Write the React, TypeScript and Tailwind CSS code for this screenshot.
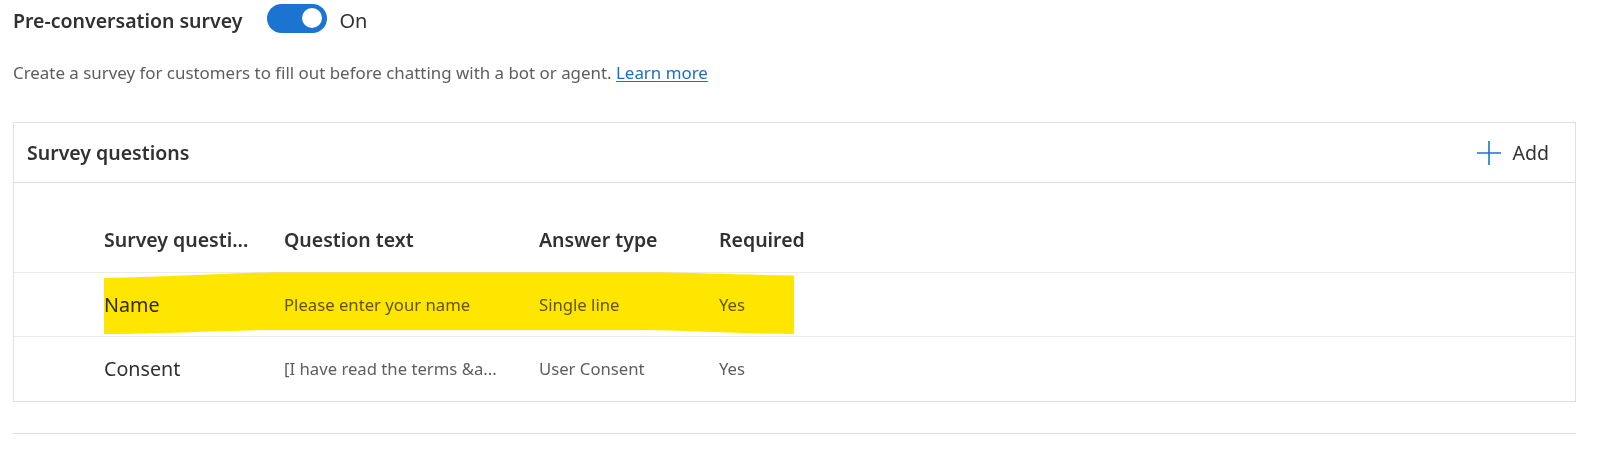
const columns = [
  { key: 'name', label: 'Survey questi...', width: 'w-[180px]' },
  { key: 'text', label: 'Question text', width: 'w-[255px]' },
  { key: 'type', label: 'Answer type', width: 'w-[180px]' },
  { key: 'required', label: 'Required', width: 'flex-1' },
];

// question text is shown already clipped, as the grid renders it
const rows = [
  { name: 'Name', text: 'Please enter your name', type: 'Single line', required: 'Yes' },
  { name: 'Consent', text: '[I have read the terms &a...', type: 'User Consent', required: 'Yes' },
];

const Toggle = ({ on }: { on: boolean }) => (
  <span
    className={[
      'relative inline-flex h-[29px] w-[60px] shrink-0 items-center rounded-full',
      on ? 'bg-[#1b75d0]' : 'bg-[#c8c6c4]',
    ].join(' ')}
  >
    <span className={['absolute h-[20px] w-[20px] rounded-full bg-white', on ? 'right-[5px]' : 'left-[5px]'].join(' ')} />
  </span>
);

const PlusIcon = () => (
  <svg width="24" height="24" viewBox="0 0 24 24" className="shrink-0">
    <path d="M12 0 V24 M0 12 H24" stroke="#1b75d0" strokeWidth="1.6" fill="none" />
  </svg>
);

// Marker highlight drawn over the first row (annotation in the screenshot).
const Highlight = () => (
  <svg
    className="pointer-events-none absolute left-[90px] top-[-1px] mix-blend-multiply"
    width="700"
    height="66"
    viewBox="0 0 700 66"
  >
    <path
      d="M0 6 C 60 5, 120 1, 170 0.5 L 540 0.5 C 600 0.5, 640 3, 690 3.5 L 690 62 C 640 62, 600 59, 540 58 L 170 58 C 120 58, 60 62, 0 62 Z"
      fill="#ffe600"
    />
  </svg>
);

export default function App() {
  return (
    <div className="h-[465px] w-[1612px] overflow-hidden bg-white font-['Segoe_UI','Noto_Sans',sans-serif] text-[#323130]">
      <div className="flex h-[41px] items-center pl-[13px] pt-[1px]">
        <span className="text-[19.5px] font-semibold leading-[26px]">Pre-conversation survey</span>
        <span className="ml-[25px]">
          <Toggle on />
        </span>
        <span className="ml-[12px] text-[20px] leading-[26px]">On</span>
      </div>

      <p className="mt-[21px] pl-[13px] text-[16.9px] leading-[22px] text-[#605e5c]">
        Create a survey for customers to fill out before chatting with a bot or agent.{' '}
        <a className="text-[#1b6fc6] underline underline-offset-2" href="#">
          Learn more
        </a>
      </p>

      <div className="ml-[13px] mt-[38px] w-[1563px] border border-[#e1dfdd]">
        <div className="flex h-[60px] items-center justify-between border-b border-[#e1dfdd] pl-[13px] pr-[26px]">
          <span className="text-[19.5px] font-semibold leading-[26px]">Survey questions</span>
          <button className="flex items-center gap-[12px] text-[19.5px] leading-[26px]">
            <PlusIcon />
            Add
          </button>
        </div>

        <div className="flex h-[90px] items-end border-b border-[#edebe9] pb-[19px] pl-[90px]">
          {columns.map((col) => (
            <span key={col.key} className={`${col.width} whitespace-nowrap pr-[16px] text-[19.5px] font-semibold leading-[26px]`}>
              {col.label}
            </span>
          ))}
        </div>

        <div className="relative">
          {rows.map((row, i) => (
            <div
              key={row.name}
              className={[
                'flex h-[64px] items-center pl-[90px]',
                i < rows.length - 1 ? 'border-b border-[#edebe9]' : '',
              ].join(' ')}
            >
              <span className="w-[180px] whitespace-nowrap pr-[20px] text-[19.7px] leading-[26px]">{row.name}</span>
              <span className="w-[255px] whitespace-nowrap pr-[20px] text-[16.7px] leading-[22px] text-[#605e5c]">{row.text}</span>
              <span className="w-[180px] whitespace-nowrap pr-[20px] text-[16.7px] leading-[22px] text-[#605e5c]">{row.type}</span>
              <span className="flex-1 text-[16.7px] leading-[22px] text-[#605e5c]">{row.required}</span>
            </div>
          ))}
          <Highlight />
        </div>
      </div>

      <div className="ml-[13px] mt-[31px] h-px w-[1563px] bg-[#e1dfdd]" />
    </div>
  );
}
